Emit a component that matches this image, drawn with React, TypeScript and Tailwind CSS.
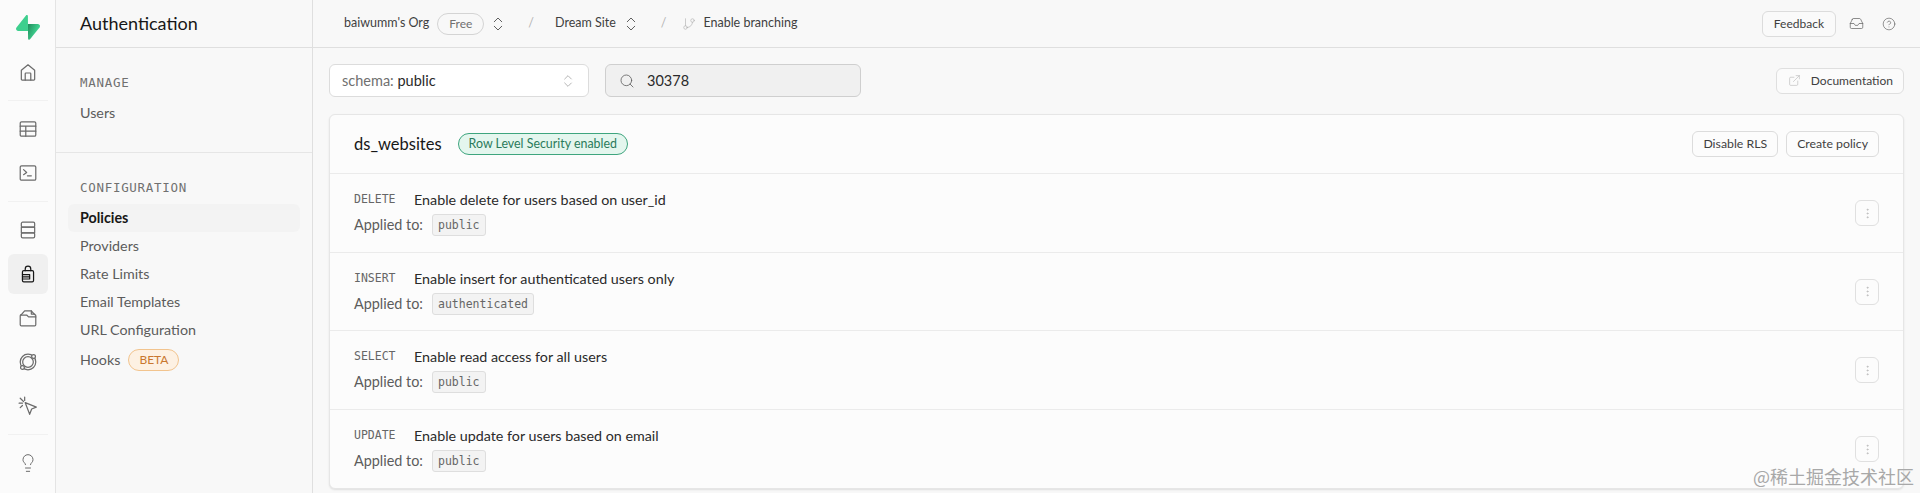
import { ChevronsUpDown, ExternalLink, GitBranch, HelpCircle, Inbox, Lightbulb, MoreVertical, Search } from "lucide-react"
import type { ReactNode } from "react"

const sans = "font-['Lato','Noto_Sans',sans-serif]"
const mono = "font-['DejaVu_Sans_Mono',monospace]"

function Logo() {
    return (
        <svg width="24" height="25" viewBox="0 0 109 113" fill="none">
            <defs>
                <linearGradient id="sb" x1="54" y1="55" x2="94" y2="72" gradientUnits="userSpaceOnUse">
                    <stop stopColor="#249361" />
                    <stop offset="1" stopColor="#3ECF8E" />
                </linearGradient>
            </defs>
            <path d="M63.7076 110.284C60.8481 113.885 55.0502 111.912 54.9813 107.314L53.9738 40.0627L99.1935 40.0627C107.384 40.0627 111.952 49.5228 106.859 55.9374L63.7076 110.284Z" fill="url(#sb)" />
            <path d="M45.317 2.07103C48.1765 -1.53037 53.9745 0.442937 54.0434 5.041L54.4849 72.2922H9.83113C1.64038 72.2922 -2.92775 62.8321 2.1655 56.4175L45.317 2.07103Z" fill="#3ECF8E" />
        </svg>
    )
}

function RailIcon({ children, active }: { children: ReactNode; active?: boolean }) {
    return (
        <div className={`flex h-10 w-10 items-center justify-center rounded-md ${active ? "bg-[#f0f0f0] text-[#171717]" : "text-[#6b6b6b]"}`}>
            <svg width="20" height="20" viewBox="0 0 18 18" fill="none" stroke="currentColor" strokeWidth="1.1" strokeLinecap="round" strokeLinejoin="round">
                {children}
            </svg>
        </div>
    )
}

function Rail() {
    return (
        <div className="flex w-14 shrink-0 flex-col items-center gap-1 border-r border-[#e4e4e4] bg-[#fbfbfb] pt-[7px]">
            <div className="mb-px flex h-10 w-10 items-center justify-center"><Logo /></div>
            <RailIcon>
                <path d="M3 15.500V7.500L9 2.500l6 5V15.500a.8.8 0 0 1-.8.8H3.800a.8.8 0 0 1-.8-.8Z" />
                <path d="M6.500 16.300V10.500a.6.6 0 0 1 .6-.6h3.800a.6.6 0 0 1 .6.6v5.800" />
            </RailIcon>
            <div className="my-1 h-px w-10 bg-[#f1f1f1]" />
            <RailIcon>
                <rect x="2" y="2.500" width="14" height="13" rx="1.200" />
                <path d="M2 6.500h14M2 11h14M7 6.500V15.500" />
            </RailIcon>
            <RailIcon>
                <rect x="2" y="2.500" width="14" height="13" rx="1.200" />
                <path d="M5 6l2.800 2.500L5 10.500M8.500 11.500h3.500" />
            </RailIcon>
            <div className="my-1 h-px w-10 bg-[#f1f1f1]" />
            <RailIcon>
                <rect x="3" y="2" width="12" height="4.500" rx="1.200" />
                <rect x="3" y="6.500" width="12" height="5" />
                <rect x="3" y="11.500" width="12" height="4.500" rx="1.200" />
            </RailIcon>
            <RailIcon active>
                <path d="M6.500 6V4.500a2.500 2.500 0 0 1 5 0V6" />
                <rect x="4" y="6" width="10" height="10" rx="1.200" />
                <path d="M4 9.500h6.500v4H4M4 11.500h6.500" />
            </RailIcon>
            <RailIcon>
                <path d="M2 15V7a1 1 0 0 1 1-1l3-3.500h6l3 3.500h.2a.8.8 0 0 1 .8.8V15a1 1 0 0 1-1 1H3a1 1 0 0 1-1-1Z" />
                <path d="M2.500 6.500H8l1.500 1.500H16M12 2.500V5.500h3" />
            </RailIcon>
            <RailIcon>
                <circle cx="9" cy="9" r="7" />
                <circle cx="9" cy="9" r="4.800" />
                <circle cx="14" cy="4" r="1.700" fill="#f8f8f8" />
                <circle cx="4" cy="14" r="1.700" fill="#f8f8f8" />
            </RailIcon>
            <RailIcon>
                <path d="M6.500 6l10 4-4.200 1.700L10.500 16.500Z" />
                <path d="M2 2l3 3M1 6.500h3M6 1v3M2 10.500l2-2" />
            </RailIcon>
            <div className="my-1 h-px w-10 bg-[#f1f1f1]" />
            <div className="flex h-10 w-10 items-center justify-center text-[#6b6b6b]">
                <Lightbulb size={20} strokeWidth={1.2} />
            </div>
        </div>
    )
}

function NavItem({ children, active }: { children: ReactNode; active?: boolean }) {
    return (
        <div className={`flex h-7 items-center rounded-md px-3 text-[14.300px] ${active ? "bg-[#f3f3f3] font-bold text-[#171717]" : "text-[#5c5c5c]"}`}>
            {children}
        </div>
    )
}

function Sidebar() {
    return (
        <div className="flex w-[257px] shrink-0 flex-col border-r border-[#dfdfdf] bg-[#f8f8f8]">
            <div className="flex h-12 shrink-0 items-center border-b border-[#dfdfdf] pl-6 text-lg text-[#171717]">
                <span className="mb-[1px]">Authentication</span>
            </div>
            <div className="h-[105px] shrink-0 border-b border-[#e6e6e6] px-3 pt-[26px]">
                <div className={`${mono} mb-[7px] px-3 text-[12.500px] leading-[18px] tracking-[0.7px] text-[#707070]`}>MANAGE</div>
                <NavItem>Users</NavItem>
            </div>
            <div className="px-3 pt-[26px]">
                <div className={`${mono} mb-[7px] px-3 text-[12.500px] leading-[18px] tracking-[0.7px] text-[#707070]`}>CONFIGURATION</div>
                <NavItem active>Policies</NavItem>
                <NavItem>Providers</NavItem>
                <NavItem>Rate Limits</NavItem>
                <NavItem>Email Templates</NavItem>
                <NavItem>URL Configuration</NavItem>
                <div className="mt-[2px]">
                    <NavItem>
                        Hooks
                        <span className="ml-2 rounded-full border border-[#f2c48e] bg-[#fdf1e3] px-[10px] text-xs leading-[20px] text-[#c9772f]">BETA</span>
                    </NavItem>
                </div>
            </div>
        </div>
    )
}

function TopBar() {
    return (
        <div className="flex h-12 shrink-0 items-center border-b border-[#dfdfdf] bg-[#f8f8f8] pl-[31px] pr-[24px] text-[12.500px] text-[#3f3f3f]">
            <span>baiwumm's Org</span>
            <span className="ml-[8px] rounded-full border border-[#d4d4d4] px-[11px] text-xs leading-[20px] text-[#707070]">Free</span>
            <ChevronsUpDown size={18} strokeWidth={1.1} className="ml-[5px] text-[#3f3f3f]" />
            <span className="ml-[21px] text-[#b5b5b5]">/</span>
            <span className="ml-[21px]">Dream Site</span>
            <ChevronsUpDown size={18} strokeWidth={1.1} className="ml-[6px] text-[#3f3f3f]" />
            <span className="ml-[21px] text-[#b5b5b5]">/</span>
            <GitBranch size={14} strokeWidth={1.1} className="ml-[16px] text-[#b0b0b0]" />
            <span className="ml-[7px]">Enable branching</span>
            <div className="ml-auto flex h-[26px] items-center rounded-md border border-[#dcdcdc] bg-[#fafafa] px-[11px] text-xs text-[#3f3f3f]">Feedback</div>
            <Inbox size={15} strokeWidth={1.1} className="ml-[13px] text-[#5c5c5c]" />
            <HelpCircle size={14} strokeWidth={1.1} className="ml-[18px] text-[#5c5c5c]" />
        </div>
    )
}

function Toolbar() {
    return (
        <div className="flex h-[33px] items-center">
            <div className="flex h-full w-[260px] items-center justify-between rounded-md border border-[#dcdcdc] bg-white pl-3 pr-[12px] text-[14.500px]">
                <span><span className="text-[#707070]">schema:</span> <span className="text-[#2a2a2a]">public</span></span>
                <ChevronsUpDown size={16} strokeWidth={1.1} className="text-[#9a9a9a]" />
            </div>
            <div className="ml-4 flex h-full w-[256px] items-center rounded-md border border-[#cfcfcf] bg-[#f0f0f0] pl-[13px] text-[14.500px] text-[#2a2a2a]">
                <Search size={16} strokeWidth={1.2} className="text-[#5c5c5c]" />
                <span className="ml-[12px]">30378</span>
            </div>
            <div className="ml-auto flex h-[26px] items-center rounded-md border border-[#dfdfdf] bg-[#fbfbfb] pl-[11px] pr-[10px] text-xs text-[#3f3f3f]">
                <ExternalLink size={13} strokeWidth={1.1} className="text-[#b5b5b5]" />
                <span className="ml-[10px]">Documentation</span>
            </div>
        </div>
    )
}

function Btn({ children }: { children: ReactNode }) {
    return <div className="flex h-[26px] items-center rounded-md border border-[#dcdcdc] bg-[#fcfcfc] px-[10px] text-[12.300px] text-[#3f3f3f]">{children}</div>
}

function PolicyRow({ cmd, title, target, tall, last }: { cmd: string; title: string; target: string; tall?: boolean; last?: boolean }) {
    return (
        <div className={`flex items-center justify-between px-[24px] ${tall ? "h-[79px]" : "h-[78px]"} ${last ? "" : "border-b border-[#ebebeb]"}`}>
            <div className="flex flex-col">
                <div className="flex h-5 items-center">
                    <span className={`${mono} w-[60px] text-[11.500px] text-[#666666]`}>{cmd}</span>
                    <span className="text-[14.300px] text-[#2a2a2a]">{title}</span>
                </div>
                <div className="mt-[4px] flex items-center">
                    <span className="w-[78px] text-[14.400px] text-[#5c5c5c]">Applied to:</span>
                    <span className={`${mono} rounded-[3px] border border-[#dedede] bg-[#f3f3f3] px-[5px] text-[11.500px] leading-[20px] text-[#666666]`}>{target}</span>
                </div>
            </div>
            <div className="flex h-[26px] w-6 items-center justify-center rounded-md border border-[#e0e0e0] text-[#b5b5b5]">
                <MoreVertical size={13} strokeWidth={1.3} />
            </div>
        </div>
    )
}

export default function App() {
    return (
        <div className={`${sans} relative flex h-screen overflow-hidden bg-[#f8f8f8]`}>
            <Rail />
            <Sidebar />
            <div className="flex min-w-0 flex-1 flex-col">
                <TopBar />
                <div className="px-4 pt-4">
                    <Toolbar />
                    <div className="mt-[17px] rounded-md border border-[#e6e6e6] bg-[#fcfcfc] shadow-[0_1px_2px_rgba(0,0,0,0.1)]">
                        <div className="flex h-[59px] items-center justify-between border-b border-[#ebebeb] px-[24px]">
                            <div className="flex items-center">
                                <span className="text-[16.500px] text-[#171717]">ds_websites</span>
                                <span className="ml-[16px] rounded-full border border-[#3ea57e] bg-[#e4f6ee] px-[10px] text-[12.400px] leading-[20px] text-[#2b7a5b]">Row Level Security enabled</span>
                            </div>
                            <div className="flex gap-2">
                                <Btn>Disable RLS</Btn>
                                <Btn>Create policy</Btn>
                            </div>
                        </div>
                        <PolicyRow cmd="DELETE" title="Enable delete for users based on user_id" target="public" tall />
                        <PolicyRow cmd="INSERT" title="Enable insert for authenticated users only" target="authenticated" />
                        <PolicyRow cmd="SELECT" title="Enable read access for all users" target="public" tall />
                        <PolicyRow cmd="UPDATE" title="Enable update for users based on email" target="public" last />
                    </div>
                </div>
            </div>
            <span className="absolute bottom-[7px] right-[6px] font-['Noto_Sans_CJK_SC',sans-serif] text-[18px] leading-[20px] text-[#a8a8a8]">@稀土掘金技术社区</span>
        </div>
    )
}
